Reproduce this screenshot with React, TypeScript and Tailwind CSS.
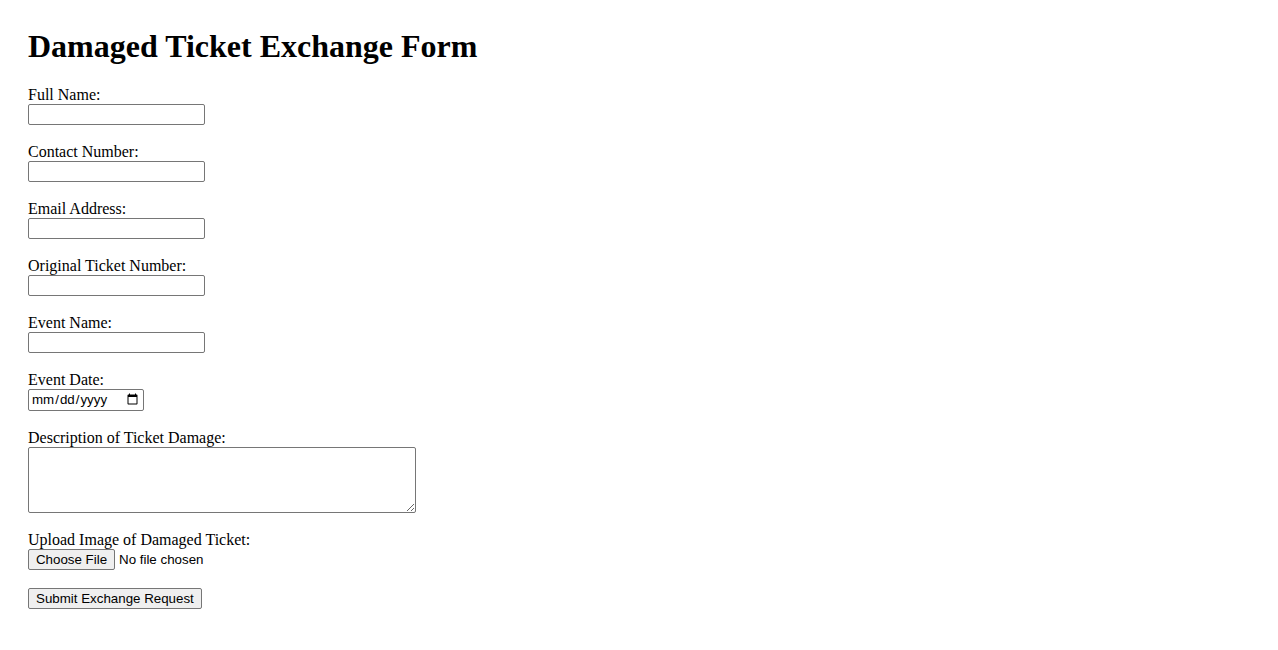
import React, { useState } from "react";

const fields = [
  { id: "fullName", label: "Full Name:", type: "text" },
  { id: "contactNumber", label: "Contact Number:", type: "tel" },
  { id: "email", label: "Email Address:", type: "email" },
  { id: "ticketNumber", label: "Original Ticket Number:", type: "text" },
  { id: "eventName", label: "Event Name:", type: "text" },
];

const controlText = "font-['Liberation_Sans',Arial,sans-serif] text-[13.33px] text-black";

export default function App() {
  const [values, setValues] = useState<Record<string, string>>({});

  const update = (id: string, v: string) => setValues((prev) => ({ ...prev, [id]: v }));

  return (
    <div className="min-h-screen bg-white px-7 pt-7 font-['Liberation_Serif','Times_New_Roman',serif] text-black">
      <h1 className="mb-[21px] text-[32px] font-bold leading-[37px]">Damaged Ticket Exchange Form</h1>

      <form className="flex flex-col items-start" onSubmit={(e) => e.preventDefault()}>
        {fields.map((f) => (
          <div key={f.id} className="mb-[18px] flex flex-col items-start">
            <label htmlFor={f.id} className="h-[18px] text-[16px] leading-[18px]">
              {f.label}
            </label>
            <input
              id={f.id}
              type={f.type}
              value={values[f.id] || ""}
              onChange={(e) => update(f.id, e.target.value)}
              className={`h-[21px] w-[177px] rounded-[2px] border border-[#767676] bg-white px-[2px] ${controlText}`}
            />
          </div>
        ))}

        {/* date */}
        <div className="mb-[18px] flex flex-col items-start">
          <label htmlFor="eventDate" className="h-[18px] text-[16px] leading-[18px]">
            Event Date:
          </label>
          <input
            id="eventDate"
            type="date"
            className={`h-[22px] w-[116px] rounded-[2px] border border-[#767676] bg-white px-[2px] ${controlText}`}
          />
        </div>

        <div className="mb-[18px] flex flex-col items-start">
          <label htmlFor="damage" className="h-[18px] text-[16px] leading-[18px]">
            Description of Ticket Damage:
          </label>
          <textarea
            id="damage"
            className={`block h-[66px] w-[388px] rounded-[2px] border border-[#767676] bg-white p-[2px] ${controlText}`}
          />
        </div>

        <div className="mb-[18px] flex flex-col items-start">
          <label htmlFor="ticketImage" className="h-[18px] text-[16px] leading-[18px]">
            Upload Image of Damaged Ticket:
          </label>
          <input
            id="ticketImage"
            type="file"
            accept="image/*"
            className={`h-[21px] w-[250px] ${controlText} file:mr-[4px] file:h-[21px] file:w-[87px] file:rounded-[2px] file:border file:border-[#767676] file:bg-[#efefef] file:px-[6px] file:text-[13.33px] file:text-black`}
          />
        </div>

        <button
          type="submit"
          className={`h-[21px] rounded-[2px] border border-[#767676] bg-[#efefef] px-[7px] ${controlText}`}
        >
          Submit Exchange Request
        </button>
      </form>
    </div>
  );
}
